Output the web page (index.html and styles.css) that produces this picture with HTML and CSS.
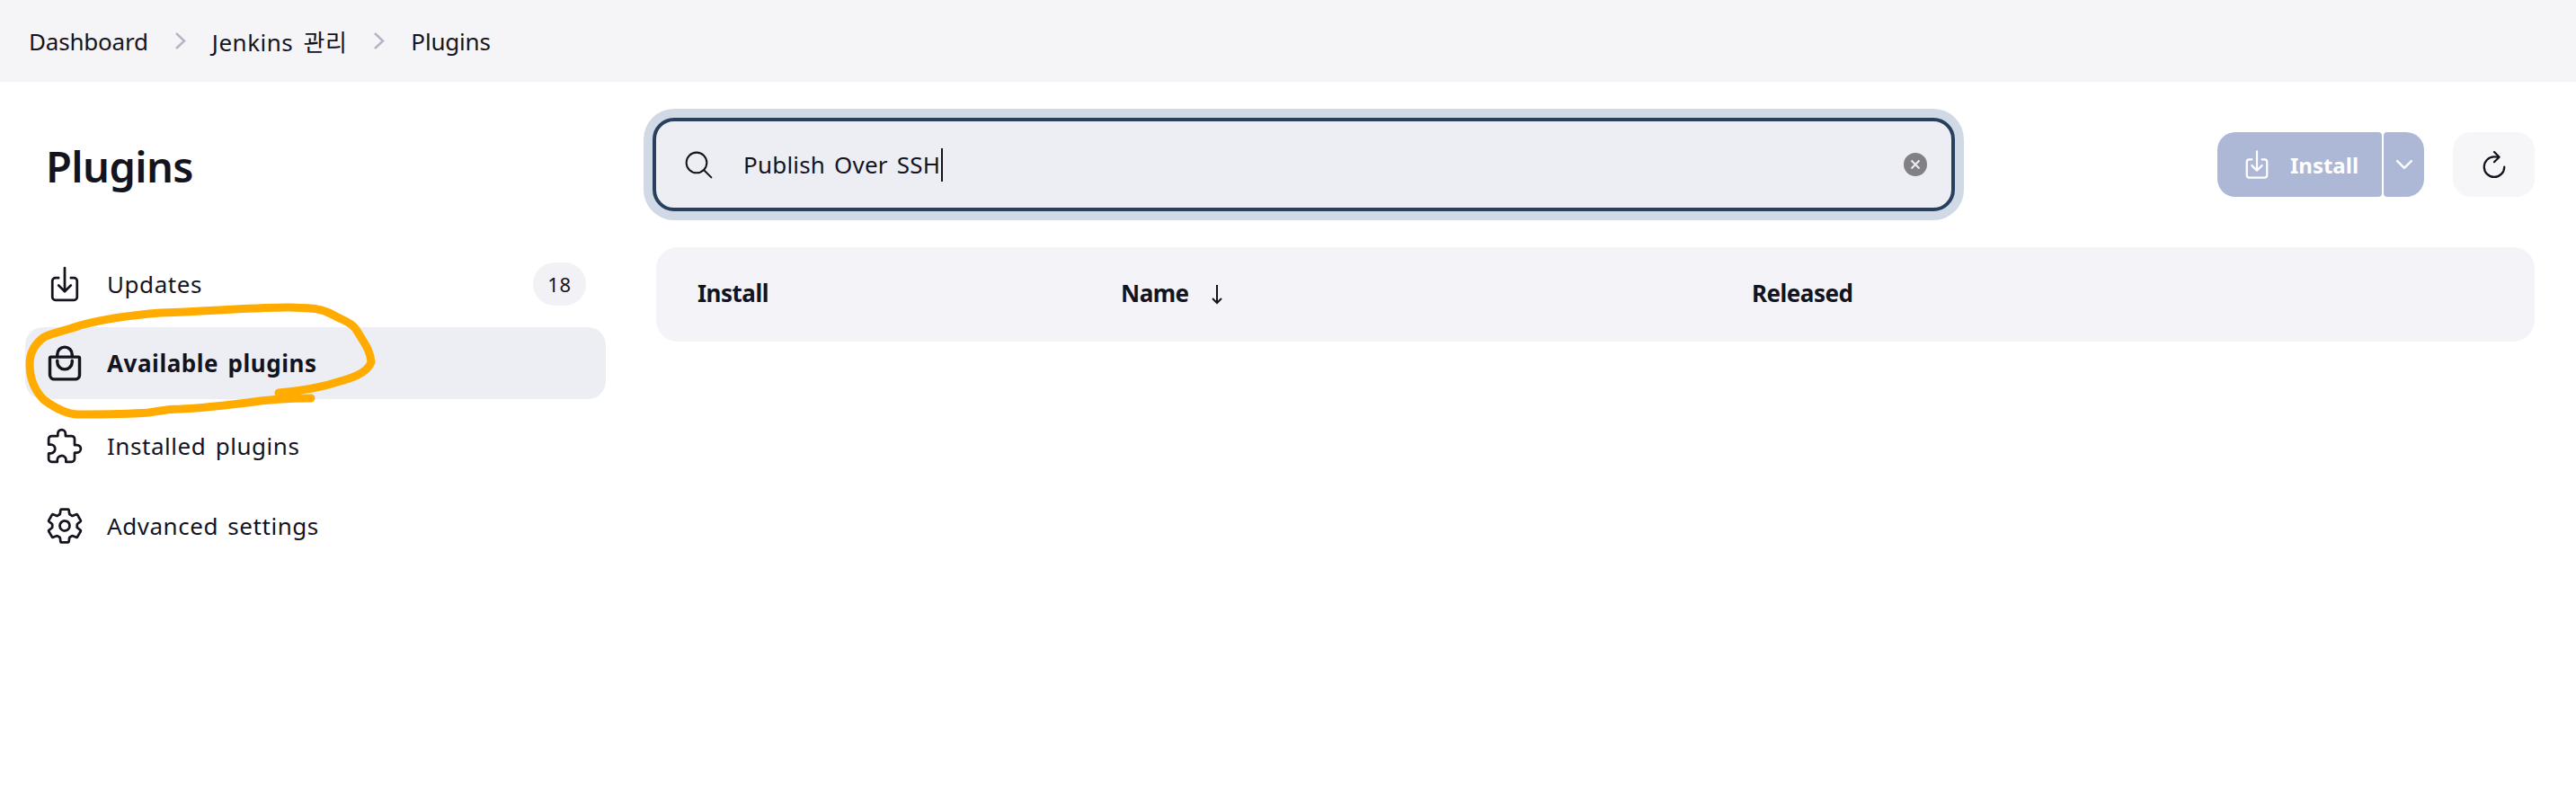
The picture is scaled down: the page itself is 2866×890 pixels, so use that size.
FILE: index.html
```html
<!DOCTYPE html>
<html lang="en">
<head>
  <meta charset="UTF-8" />
  <title>Plugins - Jenkins</title>
  <link rel="stylesheet" href="styles.css">
</head>
<body>
  <nav class="breadcrumbs">
    <a class="crumb">Dashboard</a>
    <svg class="crumb-sep" viewBox="0 0 13 21"><path d="M2 2l9 8.5L2 19"/></svg>
    <a class="crumb crumb-ko">Jenkins 관리</a>
    <svg class="crumb-sep" viewBox="0 0 13 21"><path d="M2 2l9 8.5L2 19"/></svg>
    <a class="crumb">Plugins</a>
  </nav>

  <div class="page">
    <aside class="sidebar">
      <h1>Plugins</h1>
      <ul class="side-nav">
        <li class="side-item">
          <svg class="icon" viewBox="0 0 512 512"><path d="M336 176h40a40 40 0 0140 40v208a40 40 0 01-40 40H136a40 40 0 01-40-40V216a40 40 0 0140-40h40"/><path d="M176 272l80 80 80-80M256 48v288"/></svg>
          <span>Updates</span>
          <span class="badge">18</span>
        </li>
        <li class="side-item selected">
          <svg class="icon" viewBox="0 0 512 512"><path d="M80 176a16 16 0 00-16 16v216c0 30.24 25.76 56 56 56h272c30.24 0 56-24.51 56-54.75V192a16 16 0 00-16-16zM160 176v-32a96 96 0 0196-96h0a96 96 0 0196 96v32"/><path d="M160 224v16a96 96 0 0096 96h0a96 96 0 0096-96v-16"/></svg>
          <span>Available plugins</span>
        </li>
        <li class="side-item">
          <svg class="icon" viewBox="0 0 512 512"><path d="M413.66 246.1H386a2 2 0 01-2-2v-77.24A38.86 38.86 0 00345.14 128H267.9a2 2 0 01-2-2V98.34c0-27.14-21.5-49.86-48.64-50.33a49.53 49.53 0 00-50.4 49.51V126a2 2 0 01-2 2H87.62A39.74 39.74 0 0048 167.62V238a2 2 0 002 2h26.91c29.37 0 53.68 25.48 54.09 54.85.42 29.87-23.51 57.15-53.29 57.15H50a2 2 0 00-2 2v70.38A39.74 39.74 0 0087.62 464H158a2 2 0 002-2v-20.93c0-30.28 24.75-56.35 55-57.06 30.1-.7 57 20.31 57 50.28V462a2 2 0 002 2h71.14A38.86 38.86 0 00384 425.14v-78a2 2 0 012-2h28.48c27.63 0 49.52-22.67 49.52-50.4s-23.2-48.64-50.34-48.64z"/></svg>
          <span>Installed plugins</span>
        </li>
        <li class="side-item">
          <svg class="icon" viewBox="0 0 512 512"><path d="M262.29 192.31a64 64 0 1057.4 57.4 64.13 64.13 0 00-57.4-57.4zM416.39 256a154.34 154.34 0 01-1.53 20.79l45.21 35.46a10.81 10.81 0 012.45 13.75l-42.77 74a10.81 10.81 0 01-13.14 4.59l-44.9-18.08a16.11 16.11 0 00-15.17 1.75A164.48 164.48 0 01325 400.8a15.94 15.94 0 00-8.82 12.14l-6.73 47.89a11.08 11.08 0 01-10.68 9.17h-85.54a11.11 11.11 0 01-10.69-8.87l-6.72-47.82a16.07 16.07 0 00-9-12.22 155.3 155.3 0 01-21.46-12.57 16 16 0 00-15.11-1.71l-44.89 18.07a10.81 10.81 0 01-13.14-4.58l-42.77-74a10.8 10.8 0 012.45-13.75l38.21-30a16.05 16.05 0 006-14.08c-.36-4.17-.58-8.33-.58-12.5s.21-8.27.58-12.35a16 16 0 00-6.07-13.94l-38.19-30A10.81 10.81 0 0149.48 186l42.77-74a10.81 10.81 0 0113.14-4.59l44.9 18.08a16.11 16.11 0 0015.17-1.75A164.48 164.48 0 01187 111.2a15.94 15.94 0 008.82-12.14l6.73-47.89A11.08 11.08 0 01213.23 42h85.54a11.11 11.11 0 0110.69 8.87l6.72 47.82a16.07 16.07 0 009 12.22 155.3 155.3 0 0121.46 12.57 16 16 0 0015.11 1.71l44.89-18.07a10.81 10.81 0 0113.14 4.58l42.77 74a10.8 10.8 0 01-2.45 13.75l-38.21 30a16.05 16.05 0 00-6.07 14.08c.33 4.14.55 8.3.55 12.47z"/></svg>
          <span>Advanced settings</span>
        </li>
      </ul>
    </aside>

    <main class="content">
      <div class="toolbar">
        <div class="search-box">
          <svg class="search-icon" viewBox="0 0 512 512"><path d="M221.09 64a157.09 157.09 0 10157.09 157.09A157.1 157.1 0 00221.09 64z"/><path d="M338.29 338.29L448 448"/></svg>
          <span class="search-text">Publish Over SSH</span><span class="caret"></span>
          <svg class="clear-icon" viewBox="0 0 28 28"><circle cx="14" cy="14" r="14"/><path d="M9.5 9.5l9 9M18.5 9.5l-9 9"/></svg>
        </div>
        <div class="actions">
          <button class="install-btn">
            <svg class="install-icon" viewBox="0 0 512 512"><path d="M336 176h40a40 40 0 0140 40v208a40 40 0 01-40 40H136a40 40 0 01-40-40V216a40 40 0 0140-40h40"/><path d="M176 272l80 80 80-80M256 48v288"/></svg>
            Install
          </button>
          <button class="install-more">
            <svg class="chevron-icon" viewBox="0 0 512 512"><path d="M112 184l144 144 144-144"/></svg>
          </button>
          <button class="refresh-btn">
            <svg class="refresh-icon" viewBox="0 0 512 512"><path d="M320 146s24.36-12-64-12a160 160 0 10160 160"/><path d="M256 58l80 80-80 80"/></svg>
          </button>
        </div>
      </div>

      <div class="table-head">
        <div>Install</div>
        <div class="sort-col">Name <svg class="sort-arrow" viewBox="0 0 14 24"><path d="M7 2v20M2 17l5 5 5-5"/></svg></div>
        <div>Released</div>
      </div>
    </main>
  </div>

  <!-- hand drawn marker over the selected item -->
  <svg class="scribble" viewBox="0 0 2866 890"><path d="M310 437C330 435 353 432 372 426C390 421 408 416 413 403C412 390 406 383 399 371C392 358 384 358 370 350C358 343 350 343 320 342C290 342 250 345 179 348C140 351 115 355 89 362C72 368 60 370 49 375C38 383 33 392 33 405C33 420 37 433 49 445C60 453 74 461 87 461C110 461 140 461 165 459C180 457 185 455 201 455C225 454 250 451 275 448C295 445 320 443 346 443"/></svg>
</body>
</html>
```

FILE: styles.css
```css
* { box-sizing: border-box; }
html, body { height: 100%; }
body {
  margin: 0;
  background: #fff;
  color: #14141f;
  font-family: "Noto Sans", "Noto Sans CJK KR", sans-serif;
  font-size: 26px;
  word-spacing: 3px;
  overflow: hidden;
}
.breadcrumbs {
  display: flex;
  align-items: center;
  gap: 29px;
  height: 91px;
  padding-left: 32px;
  background: #f5f5f8;
  letter-spacing: -0.2px;
}
.crumb-ko {
  letter-spacing: 0.5px;
  word-spacing: 4px;
}
.crumb-sep {
  width: 13px;
  height: 21px;
  fill: none;
  stroke: #b5b5c5;
  stroke-width: 2.5;
}
.page {
  display: flex;
}
.sidebar {
  width: 674px;
  margin-left: 28px;
  flex-shrink: 0;
}
h1 {
  margin: 0;
  padding: 62px 0 0 23px;
  height: 185px;
  font-size: 47px;
  font-weight: 600;
  line-height: 64px;
  letter-spacing: -0.6px;
}
.side-nav {
  list-style: none;
  margin: 0;
  padding: 0;
  width: 646px;
  display: flex;
  flex-direction: column;
  gap: 9px;
  letter-spacing: 0.55px;
}
.side-item {
  display: flex;
  align-items: center;
  gap: 25px;
  height: 80px;
  padding: 0 22px;
  border-radius: 20px;
}
.side-item.selected {
  background: #edeef3;
  font-weight: 700;
  margin: -1px 0 3px;
}
.icon {
  width: 44px;
  height: 44px;
  flex-shrink: 0;
  fill: none;
  stroke: #14141f;
  stroke-width: 32;
  stroke-linecap: round;
  stroke-linejoin: round;
}
.selected .icon { stroke-width: 40; }
.badge {
  margin-left: auto;
  width: 59px;
  height: 48px;
  border-radius: 24px;
  background: #f2f2f6;
  font-size: 22px;
  line-height: 48px;
  text-align: center;
}
.content {
  flex: 1;
  margin-left: 28px;
  margin-right: 46px;
  padding-top: 40px;
}
.toolbar {
  display: flex;
  align-items: center;
  justify-content: space-between;
}
.search-box {
  display: flex;
  align-items: center;
  width: 1449px;
  height: 104px;
  margin-left: -4px;
  padding: 0 26px 0 29px;
  background: #edeef3;
  border: 4px solid #283f5e;
  border-radius: 24px;
  box-shadow: 0 0 0 10px #d0d9e5;
}
.search-icon {
  width: 37px;
  height: 37px;
  margin-right: 31px;
  fill: none;
  stroke: #14141f;
  stroke-width: 28;
  stroke-linecap: round;
}
.search-text {
  letter-spacing: 0.2px;
}
.caret {
  width: 2px;
  height: 37px;
  margin-left: 1px;
  background: #14141f;
}
.clear-icon {
  width: 28px;
  height: 28px;
  margin-left: auto;
  fill: #808085;
  stroke: #edeef3;
  stroke-width: 2;
}
.actions {
  display: flex;
  align-items: center;
}
button {
  font: inherit;
  border: none;
  height: 72px;
  display: flex;
  align-items: center;
  justify-content: center;
  padding: 0;
}
.install-btn {
  width: 183px;
  gap: 19px;
  background: #adb7d6;
  color: #fff;
  font-size: 24px;
  font-weight: 700;
  border-radius: 20px 4px 4px 20px;
}
.install-more {
  width: 45px;
  margin-left: 2px;
  background: #adb7d6;
  border-radius: 4px 20px 20px 4px;
}
.refresh-btn {
  width: 91px;
  margin-left: 32px;
  background: #f6f6f8;
  border-radius: 20px;
}
.install-icon {
  width: 36px;
  height: 36px;
  fill: none;
  stroke: #fff;
  stroke-width: 32;
  stroke-linecap: round;
  stroke-linejoin: round;
}
.chevron-icon {
  width: 28px;
  height: 28px;
  fill: none;
  stroke: #fff;
  stroke-width: 44;
  stroke-linecap: round;
  stroke-linejoin: round;
}
.refresh-icon {
  width: 36px;
  height: 36px;
  fill: none;
  stroke: #14141f;
  stroke-width: 32;
  stroke-linecap: round;
  stroke-linejoin: round;
}
.table-head {
  display: grid;
  grid-template-columns: 471px 702px 1fr;
  align-items: center;
  height: 105px;
  margin-top: 40px;
  padding: 0 0 4px 46px;
  background: #f3f3f8;
  border-radius: 24px;
  font-weight: 700;
  letter-spacing: -0.5px;
}
.sort-col {
  display: flex;
  align-items: center;
  gap: 24px;
}
.sort-arrow {
  width: 14px;
  height: 24px;
  margin-top: 2px;
  fill: none;
  stroke: #14141f;
  stroke-width: 2;
}
.scribble {
  position: absolute;
  left: 0;
  top: 0;
  width: 2866px;
  height: 890px;
  fill: none;
  stroke: #ffab00;
  stroke-width: 9;
  stroke-linecap: round;
  stroke-linejoin: round;
  pointer-events: none;
}
```
